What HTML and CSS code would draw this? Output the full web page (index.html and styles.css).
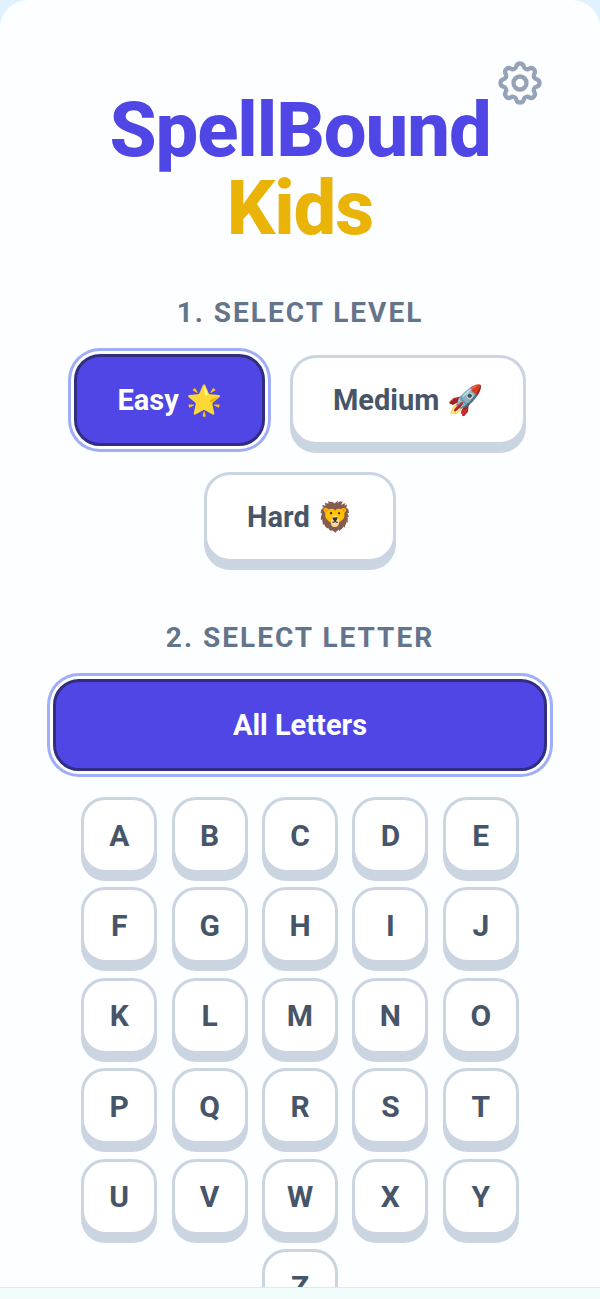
FILE: index.html
```html
<!DOCTYPE html>
<html lang="en">
<head>
<meta charset="utf-8">
<title>SpellBound Kids</title>
<link rel="stylesheet" href="styles.css">
</head>
<body>
<main class="card">
  <button class="gear" aria-label="Settings">
    <svg viewBox="0 0 24 24" fill="none" stroke="currentColor" stroke-width="2" stroke-linecap="round" stroke-linejoin="round">
      <path d="M10.325 4.317c.426-1.756 2.924-1.756 3.35 0a1.724 1.724 0 002.573 1.066c1.543-.94 3.31.826 2.37 2.37a1.724 1.724 0 001.065 2.572c1.756.426 1.756 2.924 0 3.35a1.724 1.724 0 00-1.066 2.573c.94 1.543-.826 3.31-2.37 2.37a1.724 1.724 0 00-2.572 1.065c-.426 1.756-2.924 1.756-3.35 0a1.724 1.724 0 00-2.573-1.066c-1.543.94-3.31-.826-2.37-2.37a1.724 1.724 0 00-1.065-2.572c-1.756-.426-1.756-2.924 0-3.35a1.724 1.724 0 001.066-2.573c-.94-1.543.826-3.31 2.37-2.37.996.608 2.296.07 2.572-1.065z"/>
      <path d="M15 12a3 3 0 11-6 0 3 3 0 016 0z"/>
    </svg>
  </button>
  <h1 class="title"><span class="title-main">SpellBound</span><span class="title-sub">Kids</span></h1>
  <h2 class="label label-level">1. SELECT LEVEL</h2>
  <div class="levels">
    <button class="btn level selected">Easy 🌟</button>
    <button class="btn level">Medium 🚀</button>
    <button class="btn level">Hard 🦁</button>
  </div>
  <h2 class="label label-letter">2. SELECT LETTER</h2>
  <button class="btn all selected">All Letters</button>
  <div class="letters">
    <button class="btn tile">A</button><button class="btn tile">B</button><button class="btn tile">C</button><button class="btn tile">D</button><button class="btn tile">E</button>
    <button class="btn tile">F</button><button class="btn tile">G</button><button class="btn tile">H</button><button class="btn tile">I</button><button class="btn tile">J</button>
    <button class="btn tile">K</button><button class="btn tile">L</button><button class="btn tile">M</button><button class="btn tile">N</button><button class="btn tile">O</button>
    <button class="btn tile">P</button><button class="btn tile">Q</button><button class="btn tile">R</button><button class="btn tile">S</button><button class="btn tile">T</button>
    <button class="btn tile">U</button><button class="btn tile">V</button><button class="btn tile">W</button><button class="btn tile">X</button><button class="btn tile">Y</button>
    <button class="btn tile">Z</button>
  </div>
</main>
<footer class="strip"></footer>
</body>
</html>
```
FILE: styles.css
```css
* { box-sizing: border-box; }
html, body { margin: 0; height: 100%; }
body {
  display: flex;
  flex-direction: column;
  height: 1299px;
  overflow: hidden;
  background: #e0f2fe;
  font-family: Roboto, "Noto Sans", sans-serif;
}
.card {
  position: relative;
  flex: 1;
  min-height: 0;
  overflow: hidden;
  background: #fcfeff;
  border-radius: 28px 28px 0 0;
  padding-top: 91px;
  display: flex;
  flex-direction: column;
  align-items: center;
}
.strip {
  height: 12px;
  flex: none;
  background: #f0fdfa;
  border-top: 1px solid #e2e8f0;
}
.gear {
  position: absolute;
  top: 57px;
  right: 54px;
  width: 52px;
  height: 52px;
  padding: 0;
  border: 0;
  background: none;
  color: #94a3b8;
}
.gear svg { display: block; width: 100%; height: 100%; }
.title { margin: 0; display: flex; flex-direction: column; align-items: center; font-weight: 800; font-size: 76px; line-height: 78px; letter-spacing: -1.1px; }
.title-main { color: #4f46e5; }
.title-sub { color: #eab308; }
.label {
  margin: 0;
  font-size: 28px;
  line-height: 36px;
  font-weight: 700;
  letter-spacing: 2px;
  color: #64748b;
}
.label-level { margin-top: 48px; }
.label-letter { margin-top: 58px; }
.btn {
  font-family: inherit;
  font-weight: 700;
  color: #475569;
  background: #fff;
  border: 3px solid #cbd5e1;
  box-shadow: 0 8px 0 #cbd5e1;
  padding: 0;
}
.btn.selected {
  color: #fff;
  background: #4f46e5;
  border-color: #312e81;
  box-shadow: 0 0 0 3px #fff, 0 0 0 6px #a0aef8;
}
.levels {
  margin-top: 24px;
  display: flex;
  flex-wrap: wrap;
  justify-content: center;
  gap: 27px 25px;
  width: 500px;
}
.level { height: 90px; border-radius: 26px; font-size: 29px; padding: 0 40px; }
.level.selected { height: 92px; margin: -1px 0; }
.all { margin-top: 23px; width: 494px; height: 92px; border-radius: 26px; font-size: 29px; flex: none; }
.letters {
  margin-top: 26px;
  width: 438px;
  display: flex;
  flex-wrap: wrap;
  justify-content: center;
  gap: 14.4px;
}
.tile { width: 76px; height: 76px; border-radius: 24px; font-size: 30px; }
```
